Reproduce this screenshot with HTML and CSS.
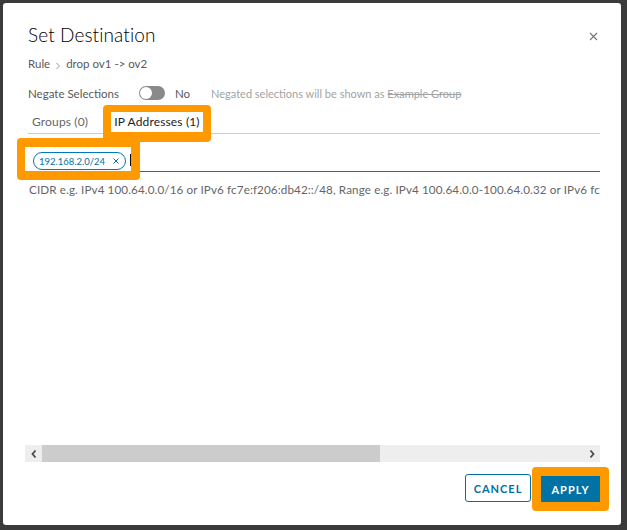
FILE: index.html
```html
<!DOCTYPE html>
<html>
<head>
<meta charset="utf-8">
<link rel="stylesheet" href="styles.css">
</head>
<body>
<div class="modal">
  <div class="head">
    <h1 class="title">Set Destination</h1>
    <button class="close" aria-label="Close">
      <svg width="9" height="9" viewBox="0 0 9 9"><path d="M1 1L8 8M8 1L1 8" stroke="#747474" stroke-width="1.1" fill="none"/></svg>
    </button>
  </div>
  <div class="crumb">
    <span>Rule</span>
    <svg class="crumb-sep" width="6" height="8" viewBox="0 0 6 8"><path d="M1.5 1L4.5 4L1.5 7" stroke="#9a9a9a" stroke-width="1" fill="none"/></svg>
    <span>drop ov1 -&gt; ov2</span>
  </div>
  <div class="negate">
    <span class="negate-label">Negate Selections</span>
    <span class="toggle"><span class="knob"></span></span>
    <span class="negate-no">No</span>
    <span class="negate-note">Negated selections will be shown as <s>Example Group</s></span>
  </div>
  <div class="scroller">
    <div class="tabs">
      <div class="tab">Groups (0)</div>
      <div class="tab active hl hl-tab">IP Addresses (1)</div>
    </div>
    <div class="input-row">
      <div class="chips hl hl-input">
        <span class="chip">192.168.2.0/24
          <svg width="6" height="6" viewBox="0 0 6 6"><path d="M0.5 0.5L5.5 5.5M5.5 0.5L0.5 5.5" stroke="#0072a3" stroke-width="1" fill="none"/></svg>
        </span>
        <span class="caret"></span>
      </div>
    </div>
    <div class="hint">CIDR e.g. IPv4 100.64.0.0/16 or IPv6 fc7e:f206:db42::/48, Range e.g. IPv4 100.64.0.0-100.64.0.32 or IPv6 fc7e:f206:db42::1-fc7e:f206:db42::ff</div>
    <div class="spacer"></div>
    <div class="hscroll">
      <span class="hs-btn"><svg width="8" height="10" viewBox="0 0 8 10"><path d="M5.5 1.5L2.5 5L5.5 8.5" stroke="#4a4a4a" stroke-width="1.8" fill="none"/></svg></span>
      <span class="hs-thumb"></span>
      <span class="hs-track"></span>
      <span class="hs-btn"><svg width="8" height="10" viewBox="0 0 8 10"><path d="M2.5 1.5L5.5 5L2.5 8.5" stroke="#4a4a4a" stroke-width="1.8" fill="none"/></svg></span>
    </div>
  </div>
  <div class="foot">
    <button class="btn btn-outline">CANCEL</button>
    <button class="btn btn-primary hl hl-btn">APPLY</button>
  </div>
</div>
</body>
</html>
```
FILE: styles.css
```css
* { box-sizing: border-box; }
html, body { margin: 0; padding: 0; }
body {
  width: 627px;
  height: 530px;
  background: #3b3b3b;
  font-family: "Lato", "Open Sans", sans-serif;
  color: #565656;
  overflow: hidden;
}
.modal {
  margin: 3px 0 0 3px;
  width: 618px;
  height: 522px;
  background: #fff;
  border-radius: 3px;
  padding: 0 21px 0 22px;
  display: flex;
  flex-direction: column;
}
.head {
  display: flex;
  justify-content: space-between;
  align-items: flex-start;
  padding: 20px 0 0 3px;
  height: 53px;
}
.title {
  margin: 0;
  font-weight: 300;
  font-size: 19px;
  line-height: 24px;
  color: #000;
  letter-spacing: 0.1px;
}
.close {
  border: 0;
  background: none;
  padding: 0;
  margin: 9px 2px 0 0;
  width: 9px;
  height: 9px;
  display: flex;
}
.crumb {
  display: flex;
  align-items: center;
  gap: 5px;
  padding-left: 3px;
  font-size: 11.5px;
  line-height: 16px;
  color: #5a5a5a;
}
.crumb-sep { margin-top: 3px; }
.negate {
  display: flex;
  align-items: center;
  padding-left: 3px;
  margin-top: 13px;
  height: 16px;
  font-size: 11.5px;
  color: #5a5a5a;
}
.negate-label { width: 111px; }
.toggle {
  width: 26px;
  height: 14px;
  border-radius: 7px;
  background: #8a8a8a;
  display: flex;
  align-items: center;
  padding: 1px;
}
.knob {
  width: 12px;
  height: 12px;
  border-radius: 50%;
  background: #fff;
}
.negate-no { margin-left: 10px; width: 36px; }
.negate-note { color: #a3a3a3; font-size: 11px; }
.negate-note s { text-decoration-thickness: 1px; }
.scroller {
  flex: 1;
  display: flex;
  flex-direction: column;
  min-height: 0;
}
.tabs {
  display: flex;
  gap: 20px;
  margin: 11px 0 0 3px;
  padding-left: 1px;
  height: 22px;
  border-bottom: 1px solid #cccccc;
}
.tab {
  padding: 0 3px;
  height: 22px;
  line-height: 20px;
  font-size: 12px;
  color: #666;
  letter-spacing: 0.15px;
  border-bottom: 2px solid transparent;
}
.tab.active {
  color: #222;
  border-bottom-color: #0072a3;
  background: #fff;
}
.hl { position: relative; }
.hl::after {
  content: "";
  position: absolute;
  border: 0 solid #ff9900;
  border-radius: 4px;
  pointer-events: none;
}
.hl-tab::after {
  inset: -7px -8px -10px -8px;
  border-width: 7px 8px 10px 8px;
}
.input-row {
  margin-top: 13px;
  height: 25px;
  border-bottom: 1px solid #0079b8;
  display: flex;
}
.chips {
  width: 106px;
  height: 24px;
  display: flex;
  align-items: center;
  padding-left: 8px;
  background: #fff;
}
.hl-input::after {
  inset: -9px -9px -9px -8px;
  border-width: 9px 9px 9px 8px;
}
.chip {
  display: flex;
  align-items: center;
  gap: 8px;
  height: 18px;
  margin-top: 4px;
  padding: 0 6px 0 5px;
  border: 1px solid #0079b8;
  border-radius: 9px;
  color: #0072a3;
  font-size: 9.5px;
  white-space: nowrap;
}
.caret {
  width: 1px;
  height: 12px;
  background: #000;
  margin: 2px 0 0 4px;
}
.hint {
  margin-top: 11px;
  padding-left: 4px;
  font-size: 11.65px;
  letter-spacing: 0.12px;
  line-height: 14px;
  color: #666;
  white-space: nowrap;
  overflow: hidden;
}
.spacer { flex: 1; }
.hscroll {
  display: flex;
  height: 17px;
  background: #eeeeee;
}
.hs-btn {
  width: 17px;
  display: flex;
  align-items: center;
  justify-content: center;
}
.hs-thumb { width: 338px; background: #cccccc; }
.hs-track { flex: 1; }
.foot {
  display: flex;
  justify-content: flex-end;
  gap: 10px;
  padding: 12px 0 23px;
}
.btn {
  height: 28px;
  font-family: "Lato", sans-serif;
  font-size: 11px;
  font-weight: 700;
  letter-spacing: 1px;
  border-radius: 3px;
  padding: 0;
}
.btn-outline {
  width: 66px;
  border: 1px solid #0072a3;
  background: #fff;
  color: #0072a3;
}
.btn-primary {
  width: 59px;
  height: 26px;
  margin-top: 2px;
  border: 0;
  border-radius: 0;
  background: #0072a3;
  color: #fff;
}
.hl-btn::after {
  inset: -9px;
  border-width: 9px;
}
```
